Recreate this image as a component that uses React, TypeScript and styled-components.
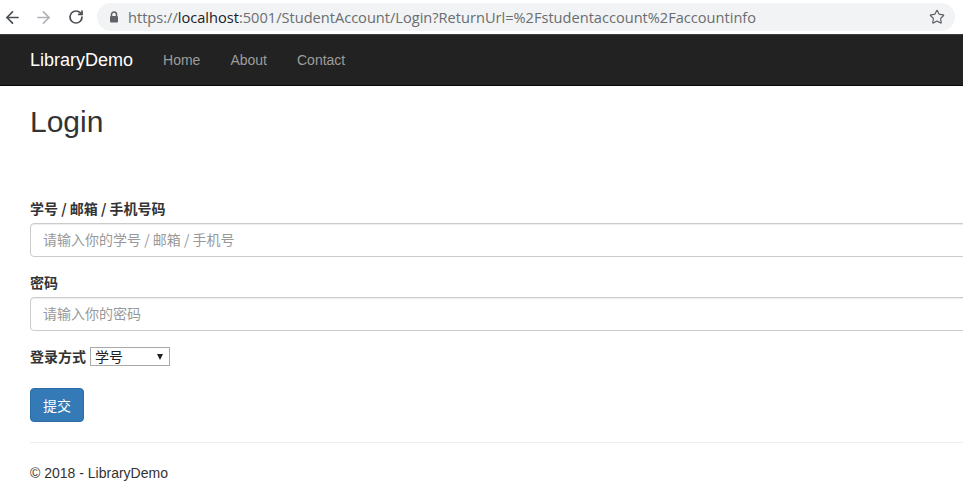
import React from 'react';
import styled, { createGlobalStyle } from 'styled-components';
import { ArrowLeft, ArrowRight, RotateCw, Star } from 'lucide-react';

const GlobalStyle = createGlobalStyle`
  * { box-sizing: border-box; }
  html, body {
    margin: 0;
    padding: 0;
    background: #fff;
    overflow: hidden;
  }
  body {
    font-family: "Liberation Sans", Arial, "Noto Sans CJK SC", sans-serif;
    font-size: 14px;
    line-height: 1.42857;
    color: #333;
  }
`;

const LockIcon: React.FC = () => (
  <svg width="10" height="12" viewBox="0 0 10 12">
    <path d="M2.5 5V3.6a2.5 2.5 0 0 1 5 0V5" fill="none" stroke="#5f6368" strokeWidth="1.5" />
    <rect x="1" y="5" width="8" height="6.5" rx="1" fill="#5f6368" />
  </svg>
);

const App: React.FC = () => {
  return (
    <>
      <GlobalStyle />
      <BrowserBar>
        <NavButton $dim={false}>
          <ArrowLeft size={19} strokeWidth={2.2} />
        </NavButton>
        <NavButton $dim>
          <ArrowRight size={19} strokeWidth={2.2} />
        </NavButton>
        <NavButton $dim={false}>
          <RotateCw size={16} strokeWidth={2.6} />
        </NavButton>
        <Omnibox>
          <LockIcon />
          <Url>
            <UrlPart $host={false}>https://</UrlPart>
            <UrlPart $host>localhost</UrlPart>
            <UrlPart $host={false}>:5001/StudentAccount/Login?ReturnUrl=%2Fstudentaccount%2Faccountinfo</UrlPart>
          </Url>
          <StarButton>
            <Star size={16} strokeWidth={1.8} />
          </StarButton>
        </Omnibox>
      </BrowserBar>

      <Navbar>
        <Brand>LibraryDemo</Brand>
        <NavLinks>
          <NavLink>Home</NavLink>
          <NavLink>About</NavLink>
          <NavLink>Contact</NavLink>
        </NavLinks>
      </Navbar>

      <BodyContent>
        <Title>Login</Title>
        <Form>
          <FormGroup>
            <Label>学号 / 邮箱 / 手机号码</Label>
            <Input placeholder="请输入你的学号 / 邮箱 / 手机号" />
          </FormGroup>
          <FormGroup>
            <Label>密码</Label>
            <Input type="password" placeholder="请输入你的密码" />
          </FormGroup>
          <InlineGroup>
            <Label>登录方式</Label>
            <SelectWrap>
              <Select defaultValue="student">
                <option value="student">学号</option>
                <option value="email">邮箱</option>
                <option value="phone">手机号</option>
              </Select>
            </SelectWrap>
          </InlineGroup>
          <SubmitButton type="button">提交</SubmitButton>
        </Form>
        <Divider />
        <Footer>© 2018 - LibraryDemo</Footer>
      </BodyContent>
    </>
  );
};

const BrowserBar = styled.div`
  display: flex;
  align-items: center;
  height: 35px;
  padding: 0 8px 0 0;
  background: #fff;
  border-bottom: 1px solid #3c3c3c;
`;
const NavButton = styled.div<{ $dim: boolean }>`
  display: flex;
  align-items: center;
  justify-content: center;
  width: 30px;
  height: 30px;
  margin-left: ${({ $dim }) => ($dim ? '1px' : '0')};
  color: ${({ $dim }) => ($dim ? '#b0b3b7' : '#4d5156')};

  &:first-child {
    margin-left: -3px;
  }
  &:nth-child(3) {
    margin-left: 3px;
  }
`;
const Omnibox = styled.div`
  flex: 1;
  display: flex;
  align-items: center;
  height: 28px;
  margin-left: 6px;
  padding: 0 10px 0 12px;
  border-radius: 14px;
  background: #f1f3f4;
`;
const Url = styled.div`
  flex: 1;
  margin-left: 9px;
  font-family: "Open Sans", "Noto Sans", sans-serif;
  font-size: 14.6px;
  white-space: nowrap;
  overflow: hidden;
`;
const UrlPart = styled.span<{ $host: boolean }>`
  color: ${({ $host }) => ($host ? '#202124' : '#6a6d71')};
`;
const StarButton = styled.div`
  display: flex;
  color: #5f6368;
`;

const Navbar = styled.nav`
  display: flex;
  align-items: center;
  height: 51px;
  padding: 0 30px 0 30px;
  background: #222;
  border-bottom: 1px solid #080808;
`;
const Brand = styled.a`
  font-size: 18px;
  color: #fff;
  margin-right: 15px;
  padding-top: 1px;
`;
const NavLinks = styled.div`
  display: flex;
  padding-top: 1px;
`;
const NavLink = styled.a`
  padding: 0 15px;
  color: #9d9d9d;
`;

const BodyContent = styled.main`
  width: 1200px;
  padding: 0 0 0 30px;
`;
const Title = styled.h2`
  margin: 19px 0 10px;
  font-size: 30px;
  font-weight: 500;
  line-height: 1.1;
`;
const Form = styled.form`
  padding-top: 50px;
`;
const FormGroup = styled.div`
  margin-bottom: 15px;
`;
const Label = styled.label`
  display: inline-block;
  margin-bottom: 5px;
  font-weight: 700;
  font-family: "Noto Sans CJK SC", "Liberation Sans", sans-serif;
  font-size: 14px;
  line-height: 20px;
`;
const Input = styled.input`
  display: block;
  width: 100%;
  height: 34px;
  padding: 6px 12px;
  font-family: "Liberation Sans", "Noto Sans CJK SC", sans-serif;
  font-size: 14px;
  color: #555;
  background: #fff;
  border: 1px solid #ccc;
  border-radius: 4px;
  box-shadow: inset 0 1px 1px rgba(0, 0, 0, 0.075);

  &::placeholder {
    color: #999;
    font-family: "Noto Sans CJK SC", sans-serif;
    font-size: 14px;
  }
`;
const InlineGroup = styled.div`
  display: flex;
  align-items: center;
  gap: 4px;
  height: 20px;
  margin-bottom: 22px;

  & > label {
    margin-bottom: 0;
  }
`;
const SelectWrap = styled.span`
  position: relative;
  display: inline-flex;

  &::after {
    content: '';
    position: absolute;
    right: 7px;
    top: 7px;
    border-left: 3.5px solid transparent;
    border-right: 3.5px solid transparent;
    border-top: 6px solid #222;
    pointer-events: none;
  }
`;
const Select = styled.select`
  appearance: none;
  width: 80px;
  height: 19px;
  padding: 0 4px;
  font-family: "Noto Sans CJK SC", sans-serif;
  font-size: 14px;
  line-height: 17px;
  color: #222;
  background: #fff;
  border: 1px solid #a9a9a9;
  border-radius: 0;
`;
const SubmitButton = styled.button`
  display: block;
  height: 34px;
  padding: 6px 12px;
  font-family: "Noto Sans CJK SC", sans-serif;
  font-size: 14px;
  line-height: 20px;
  color: #fff;
  background: #337ab7;
  border: 1px solid #2e6da4;
  border-radius: 4px;
`;
const Divider = styled.hr`
  margin: 20px 0;
  border: 0;
  border-top: 1px solid #eee;
`;
const Footer = styled.p`
  margin: 0;
  line-height: 20px;
`;

export default App;
